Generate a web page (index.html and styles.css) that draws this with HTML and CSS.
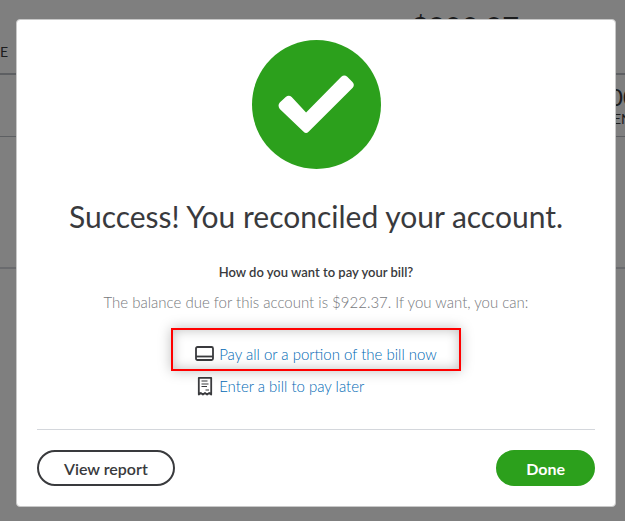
FILE: index.html
```html
<!DOCTYPE html>
<html lang="en">
  <head>
    <meta charset="UTF-8" />
    <meta name="viewport" content="width=device-width, initial-scale=1.0" />
    <title>Reconcile</title>
    <link rel="stylesheet" href="styles.css">
  </head>
  <body>
    <!-- Page behind the dialog -->
    <div class="page" aria-hidden="true">
      <div class="page-head">
        <span class="page-label">E</span>
        <span class="page-balance">$200.27</span>
      </div>
      <div class="page-row">
        <div class="page-cell">
          <div class="cell-amount">00</div>
          <div class="cell-label">EN</div>
        </div>
      </div>
      <div class="page-block"></div>
    </div>

    <div class="overlay">
      <div class="modal" role="dialog" aria-modal="true" aria-labelledby="title">
        <svg class="check" viewBox="0 0 130 130" aria-hidden="true">
          <circle cx="65" cy="65" r="65" fill="#2ca01c" />
          <path d="M28 63L34 57.500Q37 55 40 57.500L54.500 73L90 37Q93 34.500 96 37L101 42Q104 45 101.500 48L57 92.500Q54.500 95 52 92.500L28 69.500Q25.500 66 28 63Z" fill="#fff" />
        </svg>

        <h1 class="title" id="title">Success! You reconciled your account.</h1>
        <h2 class="question">How do you want to pay your bill?</h2>
        <p class="balance">The balance due for this account is $922.37. If you want, you can:</p>

        <ul class="options">
          <li class="option option-marked">
            <svg class="icon" viewBox="0 0 20 20" aria-hidden="true">
              <rect x="1" y="3" width="17" height="13" rx="1.500" fill="none" stroke="#393a3d" stroke-width="1.800" />
              <path d="M1 12.500H18" stroke="#393a3d" stroke-width="1.800" />
            </svg>
            <a href="#">Pay all or a portion of the bill now</a>
          </li>
          <li class="option">
            <svg class="icon" viewBox="0 0 20 20" aria-hidden="true">
              <path d="M3.800 18.500V1.800H16.200V18.500L14.200 17L12.100 18.500L10 17L7.900 18.500L5.800 17Z" fill="none" stroke="#393a3d" stroke-width="1.800" stroke-linejoin="round" />
              <path d="M6.500 5H12.500M6.500 8H13.500M6.500 10.500H12M10.500 14H14" stroke="#393a3d" stroke-width="1.200" />
            </svg>
            <a href="#">Enter a bill to pay later</a>
          </li>
        </ul>

        <div class="actions">
          <button type="button" class="btn">View report</button>
          <button type="button" class="btn btn-primary">Done</button>
        </div>
      </div>
    </div>
  </body>
</html>
```

FILE: styles.css
```css
:root {
  --green: #2ca01c;
  --text: #393a3d;
  --muted: #76787c;
  --link: #0069b4;
}

* {
  margin: 0;
  padding: 0;
  box-sizing: border-box;
}

body {
  height: 100vh;
  overflow: hidden;
  background: #fff;
  color: var(--text);
  font-family: Lato, "Open Sans", sans-serif;
}

/* Page behind the dialog */
.page {
  height: 100%;
  overflow: hidden;
}

.page-head {
  display: flex;
  justify-content: space-between;
  height: 75px;
  padding: 10px 106px 0 0;
  border-bottom: 2px solid #babec5;
}

.page-label {
  padding-top: 33px;
  font-size: 14px;
  line-height: 17px;
}

.page-balance {
  font-size: 29px;
  line-height: 34px;
}

.page-row {
  display: flex;
  justify-content: flex-end;
  height: 62px;
  padding-top: 9px;
  border-bottom: 1px solid #babec5;
}

.page-cell {
  width: 16px;
  white-space: nowrap;
}

.cell-amount {
  font-size: 24px;
  line-height: 26px;
}

.cell-label {
  padding-left: 4px;
  font-size: 14px;
  line-height: 17px;
}

.page-block {
  height: 132px;
  border-bottom: 2px solid #d4d7dc;
}

/* Dialog */
.overlay {
  position: fixed;
  inset: 0;
  padding: 19px 9px 14px 16px;
  background: rgba(0, 0, 0, 0.5);
}

.modal {
  display: flex;
  flex-direction: column;
  align-items: center;
  min-height: 100%;
  padding: 20px;
  border: 1px solid #c8c8c8;
  border-radius: 4px;
  background: #fff;
}

.check {
  width: 129px;
  height: 129px;
}

.title {
  margin-top: 29px;
  font-size: 30px;
  font-weight: 400;
  line-height: 36px;
}

.question {
  margin-top: 28px;
  font-size: 13px;
  font-weight: 600;
  line-height: 20px;
}

.balance {
  margin-top: 12px;
  color: var(--muted);
  font-size: 15px;
  font-weight: 300;
  line-height: 16px;
}

.options {
  display: flex;
  flex-direction: column;
  gap: 12px;
  margin-top: 34px;
  list-style: none;
}

.option {
  display: flex;
  align-items: center;
  gap: 4px;
  position: relative;
  font-size: 15px;
  font-weight: 300;
  line-height: 20px;
}

.option a {
  color: var(--link);
  text-decoration: none;
}

.option a:hover {
  text-decoration: underline;
}

.icon {
  width: 20px;
  height: 20px;
}

/* Red frame over the first option */
.option-marked::after {
  content: "";
  position: absolute;
  inset: -16px -24px -7px -24px;
  border: 2px solid #f00;
  box-shadow: 0 0 12px rgba(0, 0, 0, 0.25), inset 0 0 12px rgba(0, 0, 0, 0.25);
  pointer-events: none;
}

.actions {
  display: flex;
  justify-content: space-between;
  width: 100%;
  margin-top: auto;
  padding-top: 20px;
  border-top: 1px solid #d4d7dc;
}

.btn {
  height: 36px;
  padding: 0 25px;
  border: 2px solid var(--text);
  border-radius: 18px;
  background: #fff;
  color: var(--text);
  font-family: inherit;
  font-size: 16px;
  font-weight: 600;
  cursor: pointer;
}

.btn-primary {
  padding: 0 28px;
  border-color: var(--green);
  background: var(--green);
  color: #fff;
  font-weight: 700;
}
```
